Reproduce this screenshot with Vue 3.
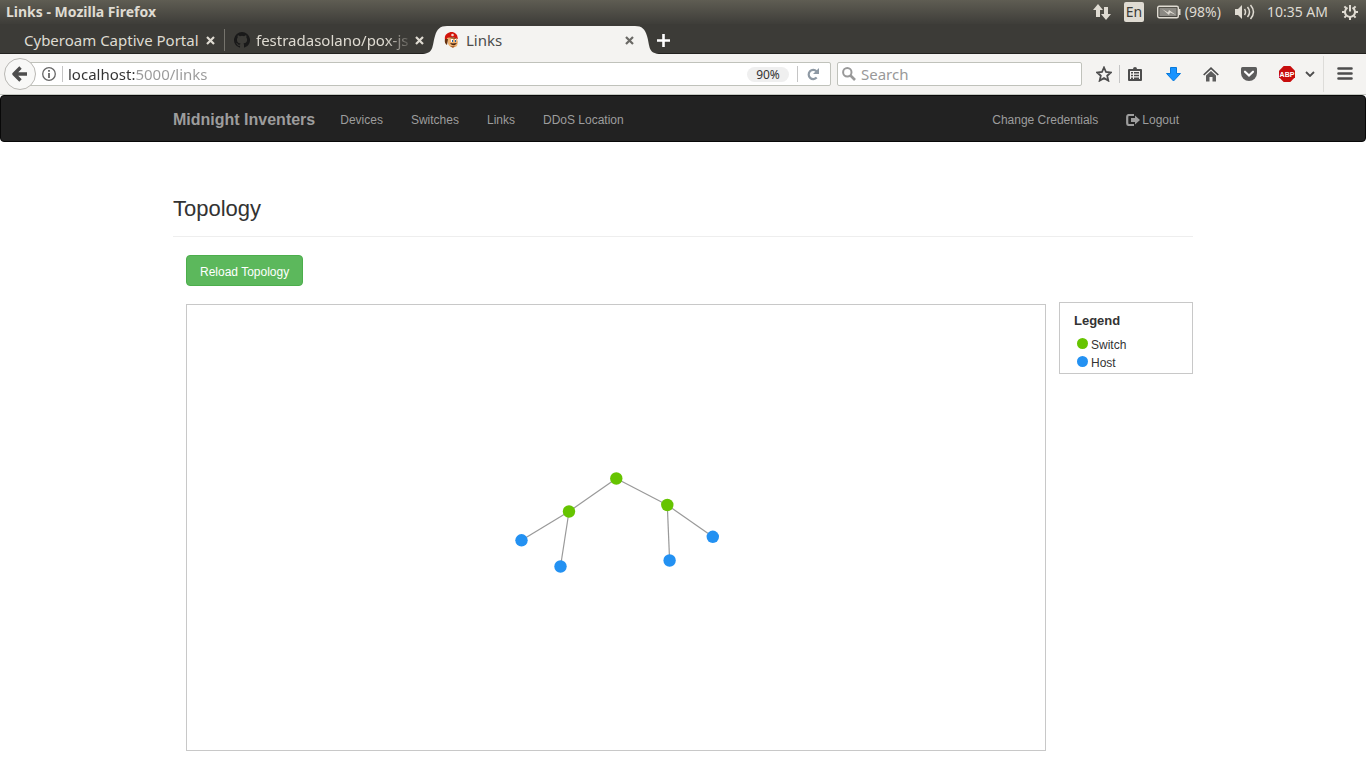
<script setup>
import { ref } from 'vue'

const address = ref('localhost:5000/links')
const query = ref('')

const navLinks = ['Devices', 'Switches', 'Links', 'DDoS Location']

const nodes = [
  { x: 429.3, y: 173.5, kind: 'switch' },
  { x: 382, y: 206.5, kind: 'switch' },
  { x: 480.3, y: 200, kind: 'switch' },
  { x: 334.5, y: 235.3, kind: 'host' },
  { x: 373.5, y: 261.5, kind: 'host' },
  { x: 482.6, y: 255.5, kind: 'host' },
  { x: 525.8, y: 231.8, kind: 'host' }
]
const links = [[0, 1], [0, 2], [1, 3], [1, 4], [2, 5], [2, 6]]
const legend = [
  { kind: 'switch', label: 'Switch' },
  { kind: 'host', label: 'Host' }
]
</script>

<template>
  <div class="screen">
    <header class="titlebar">
      <span class="window-title">Links - Mozilla Firefox</span>
      <div class="indicators">
        <svg class="ind-net" width="18" height="18" viewBox="0 0 18 18"><path d="M5 1 0 7h3v7h4V7h3zM13 17l5-6h-3V4h-4v7H8z" /></svg>
        <span class="lang">En</span>
        <svg class="ind-battery" width="24" height="14" viewBox="0 0 24 14">
          <rect x=".7" y="1.2" width="20.6" height="11.6" rx="1.5" fill="none" stroke="#dfdbd2" stroke-width="1.4" />
          <rect x="2.5" y="3" width="17" height="8" fill="#8b8983" />
          <path d="M22 4h1.500v6H22z" />
          <path d="m5 4 6 3.500 1-2.500 7 5-6-2.500-1 2.500z" />
        </svg>
        <span class="charge">(98%)</span>
        <svg class="ind-sound" width="20" height="16" viewBox="0 0 20 16">
          <path d="M0 5h3l4-4v14l-4-4H0z" />
          <path d="M9.500 5q2 3 0 6M12.500 3q4 5 0 10M15.500 1q6 7 0 14" fill="none" stroke="#dfdbd2" stroke-width="1.500" />
        </svg>
        <span class="clock">10:35 AM</span>
        <svg class="ind-power" width="16" height="16" viewBox="0 0 16 16">
          <path d="M5.500 3.600a5 5 0 1 0 5 0M8 1v6.500" fill="none" stroke="#dfdbd2" stroke-width="2" />
          <path d="M0 8h3M13 8h3M8 13v3M2.400 2.400l1.800 1.800M13.600 2.400l-1.800 1.800M2.400 13.600l1.800-1.800M13.600 13.600l-1.800-1.800" fill="none" stroke="#dfdbd2" stroke-width="2" />
        </svg>
      </div>
    </header>

    <nav class="tabs" aria-label="Tabs">
      <div class="tab tab-first">
        <span class="tab-title">Cyberoam Captive Portal</span>
        <button class="close" aria-label="Close tab"><svg width="9" height="9" viewBox="0 0 9 9"><path d="m1 1 7 7M8 1 1 8" /></svg></button>
      </div>
      <div class="tab tab-second">
        <svg width="16" height="16" viewBox="0 0 16 16"><path fill="#191919" d="M8 0a8 8 0 0 0-2.530 15.590c.4.070.55-.17.55-.38v-1.490c-2.230.49-2.690-.94-2.690-.94-.36-.93-.89-1.180-.89-1.180-.73-.5.060-.49.060-.49.800.06 1.230.83 1.230.83.71 1.220 1.870.87 2.330.66.070-.52.280-.87.500-1.070-1.770-.2-3.640-.89-3.640-3.950 0-.87.310-1.590.82-2.150-.08-.2-.36-1.020.08-2.120 0 0 .67-.21 2.200.82a7.600 7.600 0 0 1 4 0c1.530-1.030 2.200-.82 2.200-.82.440 1.100.160 1.920.080 2.120.510.560.820 1.280.820 2.150 0 3.070-1.870 3.750-3.650 3.950.29.250.540.730.540 1.480v2.200c0 .21.150.46.550.38A8 8 0 0 0 8 0z" /></svg>
        <span class="tab-title faded">festradasolano/pox-js</span>
        <button class="close" aria-label="Close tab"><svg width="9" height="9" viewBox="0 0 9 9"><path d="m1 1 7 7M8 1 1 8" /></svg></button>
      </div>
      <div class="tab-active">
        <svg class="edge" width="24" height="28" viewBox="0 0 24 28"><path d="M0 28C11 27 9 20 12 10 14 3 17 0 24 0v28z" fill="#f4f3f1" /></svg>
        <div class="tab-body">
          <svg class="favicon" width="16" height="16" viewBox="0 0 16 16">
            <path d="M1 8Q0 3 4 1q5-3 9 2l1 4-6-2-4 2z" fill="#d3160d" />
            <path d="M3 6q5-2 10 1l1 3-1 4q-2 2-6 1-4-2-4-9z" fill="#edb171" />
            <path d="M1 7q-1 4 2 6l1-6zM5 6q4-2 8 1l-4-.5z" fill="#67310f" />
            <path d="m6 11 3 .5 4-.5-2 2q-3 1-5-2z" fill="#4c230e" />
            <path d="M7 7h2v3H7zM11 7h1v3h-1z" fill="#fff" />
            <path d="M8 8h1v2H8zM11 8h1v2h-1z" fill="#2a64a8" />
            <circle cx="8.500" cy="3" r="1.300" fill="#f6d9d2" />
            <path d="M6 14h5l-2 2z" fill="#a8612e" />
          </svg>
          <span class="tab-title">Links</span>
          <button class="close dark" aria-label="Close tab"><svg width="9" height="9" viewBox="0 0 9 9"><path d="m1 1 7 7M8 1 1 8" /></svg></button>
        </div>
        <svg class="edge" width="24" height="28" viewBox="0 0 24 28"><path d="M24 28C13 27 15 20 12 10 10 3 7 0 0 0v28z" fill="#f4f3f1" /></svg>
      </div>
      <button class="new-tab" aria-label="New tab"><svg width="13" height="13" viewBox="0 0 13 13"><path d="M6.500 0v13M0 6.500h13" stroke="#fff" stroke-width="2.600" /></svg></button>
    </nav>

    <div class="toolbar">
      <button class="back" aria-label="Back">
        <svg width="16" height="16" viewBox="0 0 16 16"><path d="M8.500 1.500 2 8l6.500 6.500M2.500 8H15" fill="none" stroke="#4d4d4d" stroke-width="3.400" stroke-linejoin="round" /></svg>
      </button>
      <div class="address">
        <svg width="14" height="14" viewBox="0 0 14 14"><circle cx="7" cy="7" r="6.300" fill="none" stroke="#666" stroke-width="1.300" /><path d="M6.100 6h1.800v5H6.100zM6.100 3h1.800v1.800H6.100z" fill="#666" /></svg>
        <i class="divider"></i>
        <input v-model="address" class="url" type="text" aria-label="Address" />
        <button class="zoom-level">90%</button>
        <i class="divider"></i>
        <button class="reload" aria-label="Reload page">
          <svg width="13" height="13" viewBox="0 0 13 13"><path d="M9.700 9.600A4.600 4.600 0 1 1 9.500 3.200" fill="none" stroke="#8e99a4" stroke-width="2.200" /><path d="M12 0v6H6z" fill="#8e99a4" /></svg>
        </button>
      </div>
      <div class="search">
        <svg width="14" height="14" viewBox="0 0 14 14"><circle cx="5.300" cy="5.300" r="4.200" fill="none" stroke="#999" stroke-width="2" /><path d="m8.500 8.500 4.500 4.500" stroke="#999" stroke-width="2.600" /></svg>
        <input v-model="query" type="text" placeholder="Search" aria-label="Search" />
      </div>
      <button class="tool star" aria-label="Bookmark this page">
        <svg width="16" height="16" viewBox="0 0 16 16"><path d="m8 1.500 2 4.500 4.900.5-3.700 3.200 1.100 4.900L8 12.100l-4.300 2.500 1.100-4.900L1.100 6.500 6 6z" fill="none" stroke="#4d4d4d" stroke-width="1.800" /></svg>
      </button>
      <i class="divider tall"></i>
      <div class="tools">
        <button class="tool" aria-label="Bookmarks list">
          <svg width="14" height="16" viewBox="0 0 14 16"><path d="M1 4h12v10H1z" fill="none" stroke="#4d4d4d" stroke-width="2" stroke-linejoin="round" /><path d="M3 3 5 3Q5 1 7 1t2 2h2v2H3zM3 6h2v1.500H3zM6 6h5v1.500H6zM3 8.800h2v1.500H3zM6 8.800h5v1.500H6zM3 11.500h2V13H3zM6 11.500h5V13H6z" fill="#4d4d4d" /></svg>
        </button>
        <button class="tool" aria-label="Downloads">
          <svg width="15" height="15" viewBox="0 0 15 15"><path d="M4.500.5h6v6h4L7.500 14l-7-7.500h4z" fill="#1793ff" stroke="#0879db" /></svg>
        </button>
        <button class="tool" aria-label="Home">
          <svg width="16" height="15" viewBox="0 0 16 15"><path d="m.7 8 7.300-6.800L15.300 8" fill="none" stroke="#4d4d4d" stroke-width="1.700" /><path d="m8 4 5 4.600V14.500H9.500V10h-3v4.500H3V8.600z" fill="#5c5c5c" /></svg>
        </button>
        <button class="tool" aria-label="Pocket">
          <svg width="16" height="14" viewBox="0 0 16 14"><path d="M1.500 0h13Q16 0 16 1.500V6a8 8 0 0 1-16 0V1.500Q0 0 1.500 0z" fill="#5c5c5c" /><path d="m4 4.700 4 3.800 4-3.800" fill="none" stroke="#fff" stroke-width="2.200" stroke-linecap="round" /></svg>
        </button>
        <button class="tool" aria-label="Adblock Plus">
          <svg width="16" height="16" viewBox="0 0 16 16"><path d="M4.700 0h6.600L16 4.700v6.600L11.300 16H4.700L0 11.300V4.700z" fill="#c70d0d" /><text x="8" y="11" text-anchor="middle" class="abp">ABP</text></svg>
        </button>
      </div>
      <button class="chevron" aria-label="Adblock menu"><svg width="10" height="6" viewBox="0 0 10 6"><path d="m1 1 4 4 4-4" fill="none" stroke="#4d4d4d" stroke-width="1.800" /></svg></button>
      <i class="divider full"></i>
      <button class="menu" aria-label="Open menu"><svg width="16" height="14" viewBox="0 0 16 14"><path d="M1.500 1.500h13M1.500 6.500h13M1.500 11.500h13" stroke="#4d4d4d" stroke-width="2.600" stroke-linecap="round" /></svg></button>
    </div>

    <nav class="navbar" aria-label="Main">
      <div class="container nav-row">
        <a class="brand" href="#">Midnight Inventers</a>
        <a v-for="item in navLinks" :key="item" class="nav-link" href="#">{{ item }}</a>
        <a class="nav-link push" href="#">Change Credentials</a>
        <a class="nav-link" href="#"><svg width="14" height="12" viewBox="0 0 14 12"><path d="M8 1H3Q1.200 1 1.200 2.800v6.400Q1.200 11 3 11h5" fill="none" stroke="#9d9d9d" stroke-width="2.200" /><path d="M5 4h4V1.500L14 6l-5 4.500V8H5z" fill="#9d9d9d" /></svg>Logout</a>
      </div>
    </nav>

    <main class="container">
      <h1>Topology</h1>
      <section class="content">
        <button class="reload-topology">Reload Topology</button>
        <div class="panels">
          <div class="canvas">
            <svg viewBox="0 0 858 445" role="img" aria-label="Network topology">
              <line v-for="([a, b], i) in links" :key="'l' + i" :x1="nodes[a].x" :y1="nodes[a].y" :x2="nodes[b].x" :y2="nodes[b].y" />
              <circle v-for="(n, i) in nodes" :key="'n' + i" :class="n.kind" :cx="n.x" :cy="n.y" r="6.2" />
            </svg>
          </div>
          <aside class="legend">
            <h2>Legend</h2>
            <ul>
              <li v-for="entry in legend" :key="entry.kind"><i :class="['dot', entry.kind]"></i>{{ entry.label }}</li>
            </ul>
          </aside>
        </div>
      </section>
    </main>
  </div>
</template>

<style>
body { background: #fff; }
</style>

<style scoped>
* { box-sizing: border-box; }
.screen { font-family: "Noto Sans", "Open Sans", sans-serif; font-size: 15px; }
button { border: 0; padding: 0; background: none; font: inherit; color: inherit; display: flex; align-items: center; justify-content: center; }
svg { display: block; flex: none; }
input { border: 0; outline: 0; padding: 0; background: none; font: inherit; min-width: 0; }

.titlebar { height: 24px; display: flex; align-items: center; justify-content: space-between; padding: 0 8px 0 6px; background: linear-gradient(#5f5d53, #3e3d39); color: #dfdbd2; line-height: 20px; }
.window-title { font-weight: 700; font-size: 14px; }
.indicators { display: flex; align-items: center; fill: #dfdbd2; font-size: 14px; }
.lang { width: 20px; height: 20px; margin: 0 13px; border-radius: 2px; background: #dfdbd2; color: #3c3b37; text-align: center; line-height: 20px; }
.charge { margin: 0 14px 0 4px; }
.clock { margin: 0 14px 0 12px; }

.tabs { height: 30px; display: flex; align-items: flex-end; background: #3c3b37; box-shadow: inset 0 -1px #23221f; color: #dfdbd2; }
.tab { height: 28px; display: flex; align-items: center; }
.tab-title { flex: 1; min-width: 0; white-space: nowrap; line-height: 24px; }
.tab-first { width: 225px; padding: 0 9px 0 24px; background: linear-gradient(#76746d, #76746d) right 3px / 1px 22px no-repeat; }
.tab-second { width: 200px; padding: 0 0 0 9px; gap: 6px; }
.faded { mask-image: linear-gradient(to right, #000 130px, transparent 158px); }
.close { width: 11px; height: 16px; stroke: #dfdbd2; stroke-width: 2.2; flex: none; }
.close.dark { stroke: #6a6965; }
.tab-active { display: flex; width: 236px; margin-left: -2px; color: #4c4c4c; }
.tab-body { flex: 1; display: flex; align-items: center; gap: 6px; background: #f4f3f1; height: 28px; }
.favicon { margin-left: -3px; }
.new-tab { height: 28px; width: 14px; margin-left: -3px; }

.toolbar { height: 41px; display: flex; align-items: center; padding-left: 4px; background: #f4f3f1; border-bottom: 1px solid #c3c6c0; }
.back { width: 32px; height: 32px; border: 1px solid #b9b8b4; border-radius: 50%; background: #f8f8f7; position: relative; flex: none; }
.address { flex: 1; height: 24px; margin-left: -8px; padding: 0 8px 0 13px; display: flex; align-items: center; border: 1px solid #c0c2bb; border-radius: 2px; background: #fff; }
.divider { width: 1px; height: 16px; background: #c5c5c5; flex: none; }
.address .divider { margin: 0 5px 0 6px; }
.url { flex: 1; color: transparent; background: linear-gradient(to right, #333 67px, #999 67px); background-clip: text; -webkit-background-clip: text; height: 22px; }
.zoom-level { width: 42px; height: 15px; border-radius: 8px; background: #efefef; color: #333; font-size: 12px; }
.address .zoom-level + .divider { margin: 0 7px 0 8px; }
.reload { width: 17px; }
.search { width: 245px; height: 24px; margin-left: 6px; padding: 0 4px; display: flex; align-items: center; gap: 5px; border: 1px solid #c0c2bb; border-radius: 2px; background: #fff; }
.search input { flex: 1; height: 22px; }
.search input::placeholder { color: #999; opacity: 1; }
.tool { width: 30px; height: 30px; }
.star { margin-left: 7px; }
.tall { height: 18px; }
.tools { display: flex; gap: 8px; }
.abp { font: 700 7px "Liberation Sans", Arial, sans-serif; fill: #fff; }
.chevron { width: 16px; height: 30px; margin-right: 5px; }
.full { height: 36px; background: #dddcd9; }
.menu { width: 42px; height: 30px; }

.navbar, main { font-family: "Liberation Sans", Arial, sans-serif; font-size: 12px; }
.navbar { background: #222; border: 1px solid #080808; border-radius: 4px; }
.container { max-width: 1020px; margin: 0 auto; }
.nav-row { display: flex; align-items: center; height: 45px; padding-top: 2px; }
.navbar a { color: #9d9d9d; text-decoration: none; white-space: nowrap; }
.brand { font-size: 16px; font-weight: 700; margin-right: 11px; }
.nav-link { display: flex; align-items: center; gap: 2px; padding: 0 14px; }
.push { margin-left: auto; }

main { color: #333; }
h1 { margin: 53px 0 18px; padding-bottom: 14px; border-bottom: 1px solid #eee; font-size: 22px; line-height: 27px; font-weight: 400; }
.content { padding-left: 13px; }
.reload-topology { height: 31px; padding: 2px 13px 0; border: 1px solid #4cae4c; border-radius: 4px; background: #5cb85c; color: #fff; }
.panels { display: grid; grid-template-columns: 1fr 134px; gap: 13px; align-items: start; margin-top: 16px; }
.canvas { margin-top: 2px; border: 1px solid #c8c8c8; }
.canvas svg { width: 100%; height: auto; }
line { stroke: #999; stroke-width: 1.2; }
.switch { fill: #66c400; }
.host { fill: #2391f2; }
.legend { border: 1px solid #c8c8c8; padding: 9px 14px 1px; line-height: 18px; }
.legend h2 { margin: 0 0 6px; font-size: 13px; line-height: 18px; }
.legend ul { margin: 0; padding: 0 0 0 3px; list-style: none; }
.legend li { display: flex; align-items: center; gap: 3px; }
.dot { width: 11px; height: 11px; margin-bottom: 4px; border-radius: 50%; }
.dot.switch { background: #66c400; }
.dot.host { background: #2391f2; }
</style>
